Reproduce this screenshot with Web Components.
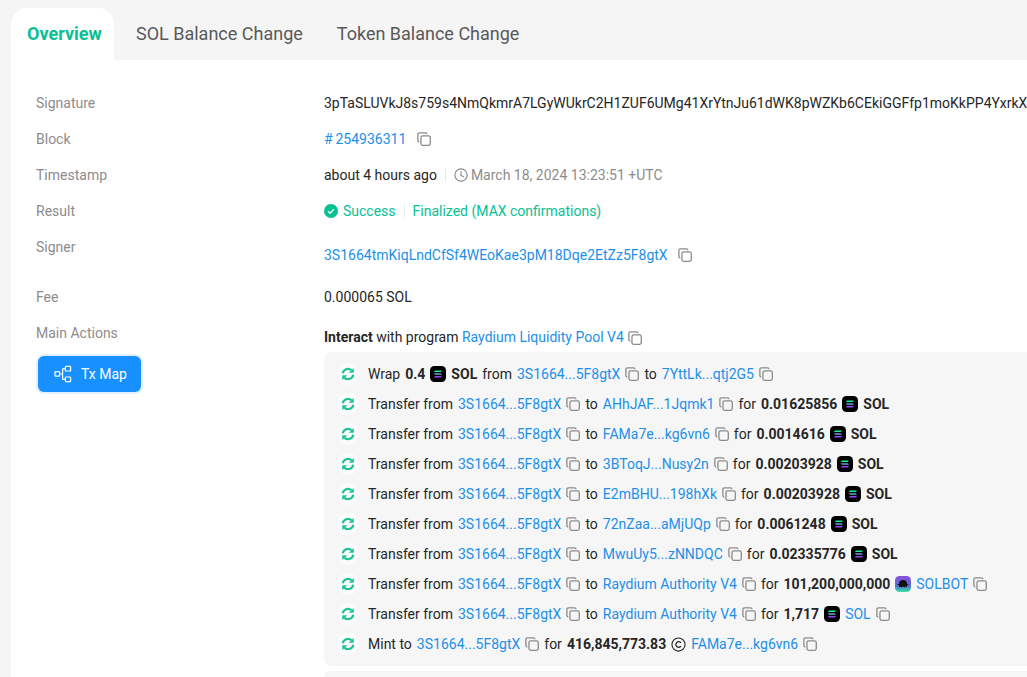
<!DOCTYPE html>
<html lang="en"><head><meta charset="utf-8"><title>Transaction</title>
<style>
html,body{margin:0;height:100%;overflow:hidden;background:#f5f5f5}
body{font:14px/22px Roboto,"Liberation Sans",sans-serif;color:#262626;padding:8px 0 0 11px;box-sizing:border-box;width:1027px;height:677px}
b{font-weight:700}
</style></head><body>
<tx-page>
  <tx-tabs></tx-tabs>
  <tx-card>
    <info-row label="Signature"><span style="white-space:nowrap">3pTaSLUVkJ8s759s4NmQkmrA7LGyWUkrC2H1ZUF6UMg41XrYtnJu61dWK8pWZKb6CEkiGGFfp1moKkPP4YxrkX</span></info-row>
    <info-row label="Block"><tx-link>#&#8201;254936311</tx-link><copy-icon style="margin-left:11px"></copy-icon></info-row>
    <info-row label="Timestamp">about 4 hours ago<tx-sep></tx-sep><clock-icon></clock-icon><span style="color:#8c8c8c;margin-left:3px">March 18, 2024 13:23:51 +UTC</span></info-row>
    <info-row label="Result"><check-icon></check-icon><span style="color:#07c193;margin-left:5px">Success</span><tx-sep></tx-sep><span style="color:#07c193">Finalized (MAX confirmations)</span></info-row>
    <info-row label="Signer" tall><tx-link>3S1664tmKiqLndCfSf4WEoKae3pM18Dqe2EtZz5F8gtX</tx-link><copy-icon style="margin-left:10px"></copy-icon></info-row>
    <info-row label="Fee">0.000065 SOL</info-row>
    <action-block>
      <tx-map-button slot="side"></tx-map-button>
      <span slot="head"><b>Interact</b>&nbsp;with program&nbsp;<tx-link>Raydium Liquidity Pool V4</tx-link><copy-icon style="margin-left:4px"></copy-icon></span>
      <action-row><span>Wrap</span><b>0.4</b><sol-icon></sol-icon><b>SOL</b><span>from</span><tx-link>3S1664...5F8gtX</tx-link><copy-icon></copy-icon><span>to</span><tx-link>7YttLk...qtj2G5</tx-link><copy-icon></copy-icon></action-row>
      <action-row><span>Transfer from</span><tx-link>3S1664...5F8gtX</tx-link><copy-icon></copy-icon><span>to</span><tx-link>AHhJAF...1Jqmk1</tx-link><copy-icon></copy-icon><span>for</span><b>0.01625856</b><sol-icon></sol-icon><b>SOL</b></action-row>
      <action-row><span>Transfer from</span><tx-link>3S1664...5F8gtX</tx-link><copy-icon></copy-icon><span>to</span><tx-link>FAMa7e...kg6vn6</tx-link><copy-icon></copy-icon><span>for</span><b>0.0014616</b><sol-icon></sol-icon><b>SOL</b></action-row>
      <action-row><span>Transfer from</span><tx-link>3S1664...5F8gtX</tx-link><copy-icon></copy-icon><span>to</span><tx-link>3BToqJ...Nusy2n</tx-link><copy-icon></copy-icon><span>for</span><b>0.00203928</b><sol-icon></sol-icon><b>SOL</b></action-row>
      <action-row><span>Transfer from</span><tx-link>3S1664...5F8gtX</tx-link><copy-icon></copy-icon><span>to</span><tx-link>E2mBHU...198hXk</tx-link><copy-icon></copy-icon><span>for</span><b>0.00203928</b><sol-icon></sol-icon><b>SOL</b></action-row>
      <action-row><span>Transfer from</span><tx-link>3S1664...5F8gtX</tx-link><copy-icon></copy-icon><span>to</span><tx-link>72nZaa...aMjUQp</tx-link><copy-icon></copy-icon><span>for</span><b>0.0061248</b><sol-icon></sol-icon><b>SOL</b></action-row>
      <action-row><span>Transfer from</span><tx-link>3S1664...5F8gtX</tx-link><copy-icon></copy-icon><span>to</span><tx-link>MwuUy5...zNNDQC</tx-link><copy-icon></copy-icon><span>for</span><b>0.02335776</b><sol-icon></sol-icon><b>SOL</b></action-row>
      <action-row><span>Transfer from</span><tx-link>3S1664...5F8gtX</tx-link><copy-icon></copy-icon><span>to</span><tx-link>Raydium Authority V4</tx-link><copy-icon></copy-icon><span>for</span><b>101,200,000,000</b><bot-icon></bot-icon><tx-link>SOLBOT</tx-link><copy-icon></copy-icon></action-row>
      <action-row><span>Transfer from</span><tx-link>3S1664...5F8gtX</tx-link><copy-icon></copy-icon><span>to</span><tx-link>Raydium Authority V4</tx-link><copy-icon></copy-icon><span>for</span><b>1,717</b><sol-icon></sol-icon><tx-link>SOL</tx-link><copy-icon></copy-icon></action-row>
      <action-row><span>Mint to</span><tx-link>3S1664...5F8gtX</tx-link><copy-icon></copy-icon><span>for</span><b>416,845,773.83</b><coin-icon></coin-icon><tx-link>FAMa7e...kg6vn6</tx-link><copy-icon></copy-icon></action-row>
    </action-block>
  </tx-card>
</tx-page>
<script>
function def(name, html, init){
  customElements.define(name, class extends HTMLElement{
    constructor(){super();this.attachShadow({mode:'open'}).innerHTML=html;}
    connectedCallback(){if(init)init(this);}
  });
}
const svgIcon=(w,body,box)=>`<style>:host{display:inline-flex;flex:none;align-items:center;justify-content:center;vertical-align:middle}svg{display:block}</style><svg width="${w}" height="${w}" viewBox="${box||'0 0 16 16'}" aria-hidden="true">${body}</svg>`;

def('tx-page',`<style>:host{display:block;width:1016px}</style><slot></slot>`);

def('tx-tabs',`<style>
:host{display:flex;height:52px;align-items:stretch;font-size:18px;color:#595959}
.t{display:flex;align-items:center;padding:0 17px}
.a{width:103px;box-sizing:border-box;padding:0 0 0 16px;background:#fff;border-radius:16px 16px 0 0;color:#07c193;font-weight:700}
.s{padding-left:22px;padding-right:12px}
</style><div class="t a">Overview</div><div class="t s">SOL Balance Change</div><div class="t" style="padding-left:22px">Token Balance Change</div>`);

def('tx-card',`<style>:host{display:block;background:#fff;padding:25px 0 0 25px;height:617px;box-sizing:border-box;overflow:hidden}</style><slot></slot>`);

def('info-row',`<style>
:host{display:grid;grid-template-columns:288px 1fr;height:36px;line-height:36px}
:host([tall]){height:50px}
:host([tall]) .v{padding-top:8px;height:36px}
.l{color:#8c8c8c}
.v{display:flex;align-items:center;height:36px;white-space:nowrap}
:host([tall]) .l{line-height:36px}
</style><div class="l"></div><div class="v"><slot></slot></div>`,el=>{el.shadowRoot.querySelector('.l').textContent=el.getAttribute('label')});

def('action-block',`<style>
:host{display:grid;grid-template-columns:288px 1fr;line-height:22px}
.l{color:#8c8c8c;height:36px;line-height:36px;white-space:nowrap}
.side{padding:5px 0 0 2px}
.head{box-sizing:border-box;padding:11px 0 4px;height:37px;line-height:22px;display:flex;align-items:center;white-space:nowrap}
.box{background:#f6f6f6;border-radius:8px 0 0 8px;padding:7px 0 7px 13px}
.next{background:#f6f6f6;border-radius:8px 0 0 0;margin-top:5px;height:6px}
</style>
<div><div class="l">Main Actions</div><div class="side"><slot name="side"></slot></div></div>
<div><div class="head"><slot name="head"></slot></div><div class="box"><slot></slot></div><div class="next"></div></div>`);

def('action-row',`<style>
:host{display:flex;align-items:center;gap:5px;height:30px;white-space:nowrap}
.i{width:22px;height:22px;border-radius:50%;background:#fbfbfb;display:flex;align-items:center;justify-content:center;margin-right:4px;flex:none}
svg{display:block}
</style><span class="i"><svg width="14" height="14" viewBox="0 0 16 16" fill="none" stroke="#1fc196" stroke-width="2.5"><path d="M2 7.2A6.1 6.1 0 0 1 12 3.6"/><path d="M14 8.8A6.1 6.1 0 0 1 4 12.4"/><path d="M14.6 1v5.6H9z" fill="#1fc196" stroke="none"/><path d="M1.4 15V9.4H7z" fill="#1fc196" stroke="none"/></svg></span><slot></slot>`);

def('tx-link',`<style>:host{color:#1d8fe9;display:inline}</style><slot></slot>`);
def('tx-sep',`<style>:host{display:inline-block;width:1px;height:14px;background:#ececec;margin:0 8px}</style>`);

def('copy-icon',svgIcon(14,`<g fill="none" stroke="#8c8c8c" stroke-width="1.5"><path d="M2.6 11.4A1.7 1.7 0 0 1 1 9.8V2.7A1.7 1.7 0 0 1 2.7 1H9.8a1.7 1.7 0 0 1 1.6 1.6"/><rect x="4.5" y="4.5" width="10.7" height="10.7" rx="2"/></g>`));

def('clock-icon',svgIcon(14,`<g fill="none" stroke="#8c8c8c" stroke-width="1.3" stroke-linecap="round"><circle cx="8" cy="8" r="7"/><path d="M8 4v4.4l2.8 1.6"/></g>`));
def('check-icon',svgIcon(14,`<circle cx="8" cy="8" r="8" fill="#07c193"/><path d="M4.6 8.2l2.3 2.3 4.4-4.6" fill="none" stroke="#fff" stroke-width="1.5"/>`));
def('sol-icon',svgIcon(16,`<rect width="16" height="16" rx="4.5" fill="#000"/><path d="M5 4.5h7l-1.3 1.5H3.8z" fill="#14f195"/><path d="M3.8 7.25h7L12 8.75H5z" fill="#6f9cd8"/><path d="M5 10h7l-1.3 1.5H3.8z" fill="#9945ff"/>`));
def('bot-icon',svgIcon(16,`<defs><linearGradient id="g" x1="0" y1="0" x2="0" y2="1"><stop offset="0" stop-color="#8a4fd8"/><stop offset=".6" stop-color="#5c6fd6"/><stop offset="1" stop-color="#35e6a0"/></linearGradient></defs><rect width="16" height="16" rx="4.5" fill="url(#g)"/><path d="M4 11.5V8a4 4 0 0 1 8 0v3.5l-1.5-1-1 1-1.5-1-1.5 1-1-1z" fill="#111"/><path d="M2.5 9l2-1M13.5 9l-2-1" stroke="#111"/>`));
def('coin-icon',svgIcon(15,`<circle cx="8" cy="8" r="7" fill="none" stroke="#262626" stroke-width="1.2"/><path d="M10.6 6.2A3 3 0 1 0 10.6 9.8" fill="none" stroke="#262626" stroke-width="1.4"/>`));

def('tx-map-button',`<style>
:host{display:inline-flex;align-items:center;width:103px;height:36px;box-sizing:border-box;padding-left:15px;background:#1890ff;color:#fff;border-radius:6px;box-shadow:0 0 0 2px #e3f1ff;white-space:nowrap}
svg{display:block;margin-right:8px}
</style><svg width="20" height="20" viewBox="0 0 20 20" fill="none" stroke="#fff" stroke-width="1.2"><rect x="2" y="7.6" width="4.6" height="4.6" rx=".6"/><rect x="12.4" y="2.4" width="5.2" height="4.6" rx=".6"/><rect x="12.4" y="13" width="5.2" height="4.6" rx=".6"/><path d="M6.6 10h3M9.6 4.7v10.6M9.6 4.7h2.8M9.6 15.3h2.8"/></svg>Tx Map`);
</script>
</body></html>
